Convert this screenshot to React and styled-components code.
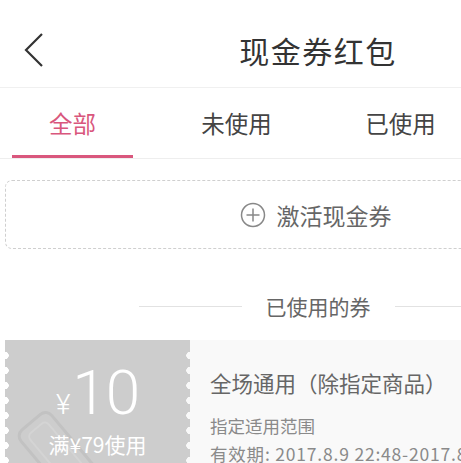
import React from 'react';
import styled, { createGlobalStyle } from 'styled-components';

const GlobalStyle = createGlobalStyle`
  html, body {
    margin: 0;
    padding: 0;
    background: #fff;
    overflow: hidden;
  }
  body {
    font-family: "Noto Sans CJK SC", "Noto Sans", sans-serif;
    color: #333;
  }
`;

const Page = styled.div`
  width: 636px;
  min-height: 463px;
  background: #fff;
`;

const Header = styled.header`
  height: 88px;
  box-sizing: border-box;
  padding-top: 12px;
  display: flex;
  align-items: center;
  justify-content: center;
  position: relative;
  border-bottom: 1px solid #f0f0f0;
`;

const Back = styled.button`
  position: absolute;
  left: 20px;
  top: 30px;
  width: 28px;
  height: 40px;
  padding: 0;
  border: 0;
  background: none;
  display: flex;
  align-items: center;
  justify-content: center;
`;

const Title = styled.h1`
  margin: 0;
  font-size: 30px;
  font-weight: 400;
  color: #333;
  letter-spacing: 1.5px;
`;

const Tabs = styled.nav`
  height: 70px;
  display: flex;
  gap: 43px;
  padding-left: 12px;
  border-bottom: 1px solid #eee;
`;

const Tab = styled.div`
  width: 121px;
  display: flex;
  align-items: center;
  justify-content: center;
  font-size: 23.5px;
  color: ${p => (p.$active ? '#d9577d' : '#444')};
  border-bottom: 3px solid ${p => (p.$active ? '#d9577d' : 'transparent')};
  box-sizing: border-box;
  padding-top: 2px;
`;

const Activate = styled.div`
  margin: 21px 5px 0;
  height: 69px;
  box-sizing: border-box;
  border: 1.5px dashed #cfcfcf;
  border-radius: 7px;
  display: flex;
  align-items: center;
  justify-content: center;
  gap: 11px;
  font-size: 23px;
  color: #666;
  padding-right: 5px;
`;

const Divider = styled.div`
  margin-top: 36px;
  height: 42px;
  display: flex;
  align-items: center;
  justify-content: center;
  gap: 24px;
  font-size: 21px;
  color: #666;

  &::before, &::after {
    content: '';
    width: 103px;
    height: 1px;
    background: #e2e2e2;
  }
`;

const Card = styled.div`
  margin: 13px 5px 0;
  height: 150px;
  display: flex;
`;

const Stub = styled.div`
  position: relative;
  width: 185px;
  flex-shrink: 0;
  background: #cdcdcd;
  display: flex;
  flex-direction: column;
  align-items: center;
  padding-top: 22px;
  box-sizing: border-box;
  overflow: hidden;
  color: #fff;

  &::before, &::after {
    content: '';
    position: absolute;
    top: 8px;
    bottom: 0;
    width: 4px;
    background-size: 4px 15px;
    background-repeat: repeat-y;
  }
  &::before {
    left: 0;
    background-image: radial-gradient(circle at 0 50%, #fff 3.5px, transparent 4px);
  }
  &::after {
    right: 0;
    background-image: radial-gradient(circle at 100% 50%, #f9f9f9 3.5px, transparent 4px);
  }
`;

const Amount = styled.div`
  display: flex;
  align-items: baseline;
  font-family: Roboto, "Liberation Sans", sans-serif;
  font-weight: 300;
  line-height: 1;
  position: relative;
  z-index: 1;
`;

const Yen = styled.span`
  font-size: 28px;
  margin-right: 2px;
`;

const Value = styled.span`
  font-size: 62px;
  letter-spacing: -1px;
`;

const Condition = styled.div`
  margin-top: 5px;
  font-size: 21px;
  line-height: 30px;
  position: relative;
  z-index: 1;
`;

const Stamp = styled.svg`
  position: absolute;
  left: 6px;
  top: 62px;
`;

const Body = styled.div`
  flex: 1;
  background: #f9f9f9;
  padding: 28px 0 0 20px;
`;

const CardTitle = styled.div`
  font-size: 21.5px;
  color: #666;
  line-height: 30px;
`;

const Meta = styled.div`
  font-size: 17.5px;
  color: #8a8a8a;
  line-height: 28px;
  margin-top: ${p => p.$gap || 0}px;
  white-space: nowrap;
  letter-spacing: ${p => p.$spread || 0}px;
`;

const ChevronLeft = () => (
  <svg width="22" height="36" viewBox="0 0 22 36">
    <path d="M19 2 L3 18 L19 34" fill="none" stroke="#333" strokeWidth="2.2" />
  </svg>
);

const PlusCircle = () => (
  <svg width="26" height="26" viewBox="0 0 26 26">
    <circle cx="13" cy="13" r="11.5" fill="none" stroke="#888" strokeWidth="1.5" />
    <path d="M13 6.5 V19.5 M6.5 13 H19.5" stroke="#888" strokeWidth="1.5" />
  </svg>
);

export default function App() {
  return (
    <Page>
      <GlobalStyle />
      <Header>
        <Back aria-label="返回">
          <ChevronLeft />
        </Back>
        <Title>现金券红包</Title>
      </Header>
      <Tabs>
        <Tab $active>全部</Tab>
        <Tab>未使用</Tab>
        <Tab>已使用</Tab>
      </Tabs>
      <Activate>
        <PlusCircle />
        <span>激活现金券</span>
      </Activate>
      <Divider>已使用的券</Divider>
      <Card>
        <Stub>
          <Stamp width="90" height="90" viewBox="0 0 90 90">
            <g transform="rotate(-40 45 45)">
              <rect x="22" y="10" width="40" height="86" rx="8" fill="none" stroke="#c2c2c2" strokeWidth="3" />
              <rect x="30" y="18" width="24" height="70" rx="5" fill="none" stroke="#d4d4d4" strokeWidth="2" />
            </g>
          </Stamp>
          <Amount>
            <Yen>¥</Yen>
            <Value>10</Value>
          </Amount>
          <Condition>满¥79使用</Condition>
        </Stub>
        <Body>
          <CardTitle>全场通用（除指定商品）</CardTitle>
          <Meta $gap={14}>指定适用范围</Meta>
          <Meta $spread={0.8}>有效期: 2017.8.9 22:48-2017.8.19 22:48</Meta>
        </Body>
      </Card>
    </Page>
  );
}
